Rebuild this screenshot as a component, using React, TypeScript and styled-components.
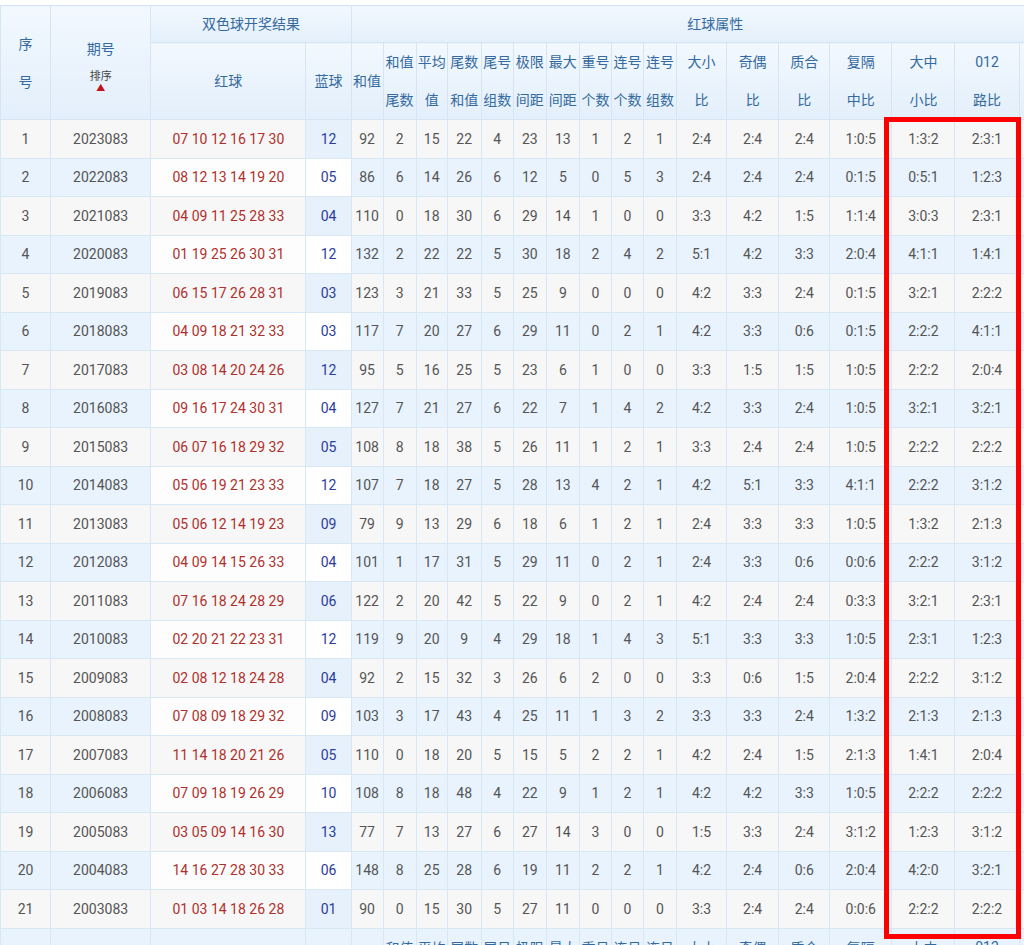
import React from "react";
import styled, { createGlobalStyle } from "styled-components";

const G = createGlobalStyle`
  html,body{margin:0;padding:0;background:#fff;overflow:hidden;width:1024px;height:945px;}
  body{font-family:Roboto,"Noto Sans CJK SC",sans-serif;}
`;

const Wrap = styled.div`position:relative;padding-top:5px;width:1024px;height:940px;overflow:hidden;`;
const Table = styled.table`
  border-collapse:collapse;table-layout:fixed;width:1080px;font-size:14px;
`;
const Th = styled.th<{ $h?: number }>`
  background:linear-gradient(#f2f8fe,#e3effb);color:#356aa0;font-weight:normal;
  border:1px solid #d5e5f4;padding:0;text-align:center;height:${p => p.$h ?? 36}px;
  line-height:36px;font-size:14px;
`;
const Tr = styled.tr<{ $even: boolean }>`
  background:${p => (p.$even ? "#e8f3fd" : "#f7f7f7")};
`;
const Td = styled.td<{ $c?: string; $bg?: string }>`
  border:1px solid #d8e7f4;text-align:center;height:37.5px;padding:0;color:${p => p.$c ?? "#555"};
  ${p => (p.$bg ? `background:${p.$bg};` : "")}
  white-space:nowrap;overflow:hidden;font-size:14px;
`;
const Arrow = styled.div`color:#c0141c;font-size:9px;line-height:8px;`;
const Sort = styled.div`font-size:11px;line-height:14px;color:#444;margin-top:6px;`;
const Box = styled.div`position:absolute;left:884px;top:117px;width:127px;height:812px;border:5px solid #f00;`;

const widths = [50,100,155,45,32,33,31,34,32,33,33,32,32,33,50,52,51,62,63,64,60];

const raw = `2023083|07 10 12 16 17 30|12|92 2 15 22 4 23 13 1 2 1 2:4 2:4 2:4 1:0:5 1:3:2 2:3:1
2022083|08 12 13 14 19 20|05|86 6 14 26 6 12 5 0 5 3 2:4 2:4 2:4 0:1:5 0:5:1 1:2:3
2021083|04 09 11 25 28 33|04|110 0 18 30 6 29 14 1 0 0 3:3 4:2 1:5 1:1:4 3:0:3 2:3:1
2020083|01 19 25 26 30 31|12|132 2 22 22 5 30 18 2 4 2 5:1 4:2 3:3 2:0:4 4:1:1 1:4:1
2019083|06 15 17 26 28 31|03|123 3 21 33 5 25 9 0 0 0 4:2 3:3 2:4 0:1:5 3:2:1 2:2:2
2018083|04 09 18 21 32 33|03|117 7 20 27 6 29 11 0 2 1 4:2 3:3 0:6 0:1:5 2:2:2 4:1:1
2017083|03 08 14 20 24 26|12|95 5 16 25 5 23 6 1 0 0 3:3 1:5 1:5 1:0:5 2:2:2 2:0:4
2016083|09 16 17 24 30 31|04|127 7 21 27 6 22 7 1 4 2 4:2 3:3 2:4 1:0:5 3:2:1 3:2:1
2015083|06 07 16 18 29 32|05|108 8 18 38 5 26 11 1 2 1 3:3 2:4 2:4 1:0:5 2:2:2 2:2:2
2014083|05 06 19 21 23 33|12|107 7 18 27 5 28 13 4 2 1 4:2 5:1 3:3 4:1:1 2:2:2 3:1:2
2013083|05 06 12 14 19 23|09|79 9 13 29 6 18 6 1 2 1 2:4 3:3 3:3 1:0:5 1:3:2 2:1:3
2012083|04 09 14 15 26 33|04|101 1 17 31 5 29 11 0 2 1 2:4 3:3 0:6 0:0:6 2:2:2 3:1:2
2011083|07 16 18 24 28 29|06|122 2 20 42 5 22 9 0 2 1 4:2 2:4 2:4 0:3:3 3:2:1 2:3:1
2010083|02 20 21 22 23 31|12|119 9 20 9 4 29 18 1 4 3 5:1 3:3 3:3 1:0:5 2:3:1 1:2:3
2009083|02 08 12 18 24 28|04|92 2 15 32 3 26 6 2 0 0 3:3 0:6 1:5 2:0:4 2:2:2 3:1:2
2008083|07 08 09 18 29 32|09|103 3 17 43 4 25 11 1 3 2 3:3 3:3 2:4 1:3:2 2:1:3 2:1:3
2007083|11 14 18 20 21 26|05|110 0 18 20 5 15 5 2 2 1 4:2 2:4 1:5 2:1:3 1:4:1 2:0:4
2006083|07 09 18 19 26 29|10|108 8 18 48 4 22 9 1 2 1 4:2 4:2 3:3 1:0:5 2:2:2 2:2:2
2005083|03 05 09 14 16 30|13|77 7 13 27 6 27 14 3 0 0 1:5 3:3 2:4 3:1:2 1:2:3 3:1:2
2004083|14 16 27 28 30 33|06|148 8 25 28 6 19 11 2 2 1 4:2 2:4 0:6 2:0:4 4:2:0 3:2:1
2003083|01 03 14 18 26 28|01|90 0 15 30 5 27 11 0 0 0 3:3 2:4 2:4 0:0:6 2:2:2 2:2:2`;

const rows = raw.split("\n").map(l => {
  const [q, r, b, rest] = l.split("|");
  return { q, r, b, v: rest.split(" ") };
});

const sub = [["和值","尾数"],["平均","值"],["尾数","和值"],["尾号","组数"],["极限","间距"],["最大","间距"],["重号","个数"],["连号","个数"],["连号","组数"],["大小","比"],["奇偶","比"],["质合","比"],["复隔","中比"],["大中","小比"],["012","路比"],["",""]];
const Two = styled.div`line-height:38px;`;
const Label = styled.div`line-height:30px;`;

export default function App() {
  return (
    <Wrap>
      <G />
      <Table>
        <colgroup>{widths.map((w, i) => <col key={i} style={{ width: w }} />)}</colgroup>
        <thead>
          <tr>
            <Th rowSpan={2}><Two>序<br />号</Two></Th>
            <Th rowSpan={2}>
              <Label>期号</Label>
              <Sort>排序</Sort><Arrow>▲</Arrow>
            </Th>
            <Th colSpan={2}>双色球开奖结果</Th>
            <Th colSpan={17}>红球属性</Th>
          </tr>
          <tr>
            <Th $h={74}>红球</Th>
            <Th>蓝球</Th>
            <Th>和值</Th>
            {sub.map((s, i) => <Th key={i}><Two>{s[0]}<br />{s[1]}</Two></Th>)}
          </tr>
        </thead>
        <tbody>
          {rows.map((r, i) => (
            <Tr key={i} $even={i % 2 === 1}>
              <Td>{i + 1}</Td>
              <Td>{r.q}</Td>
              <Td $c="#b0302c" $bg={i % 2 ? "#fdfdfd" : undefined}>{r.r}</Td>
              <Td $c="#2b3c9c" $bg={i % 2 ? "#fff" : "#e6f1fc"}>{r.b}</Td>
              {r.v.map((x, j) => <Td key={j}>{x}</Td>)}
              <Td></Td>
            </Tr>
          ))}
          <Tr $even={true}>
            <Td /><Td /><Td /><Td />
            <Td $c="#356aa0"></Td>
            {sub.map((s, i) => <Td key={i} $c="#356aa0">{s[0]}</Td>)}
          </Tr>
        </tbody>
      </Table>
      <Box />
    </Wrap>
  );
}
